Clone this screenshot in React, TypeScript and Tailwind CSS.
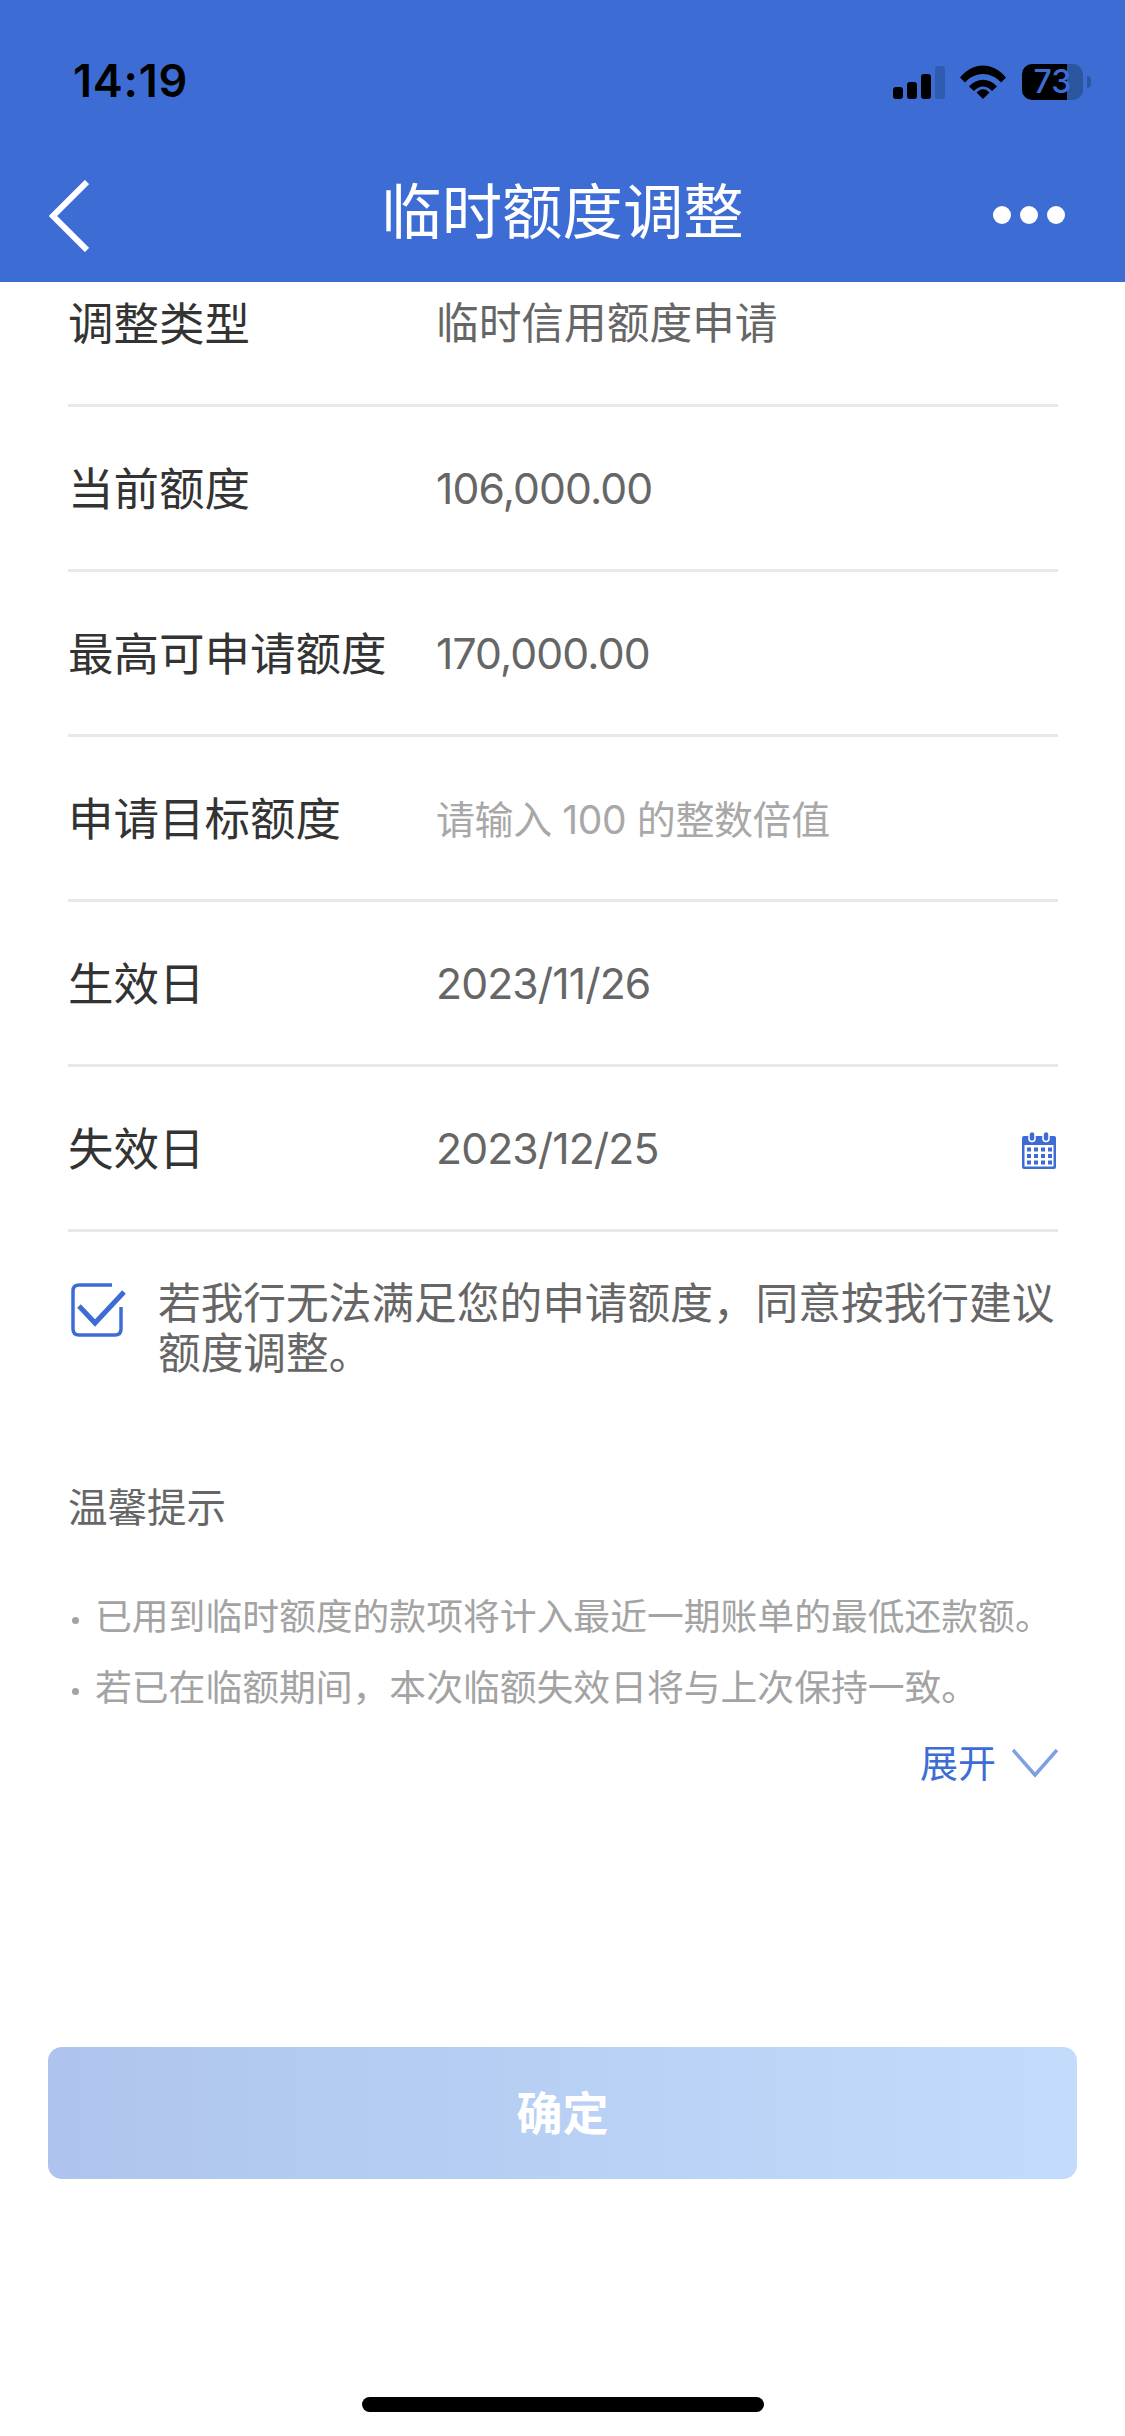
const cjk = "font-['Inter','Noto_Sans_CJK_SC',sans-serif]";

function Row({ label, value, muted, numeric, icon }: { label: string; value: string; muted?: boolean; numeric?: boolean; icon?: React.ReactNode }) {
  const valueClass = muted
    ? "flex-1 text-[39px] font-normal leading-none tracking-[-0.4px] text-[#a8a8a8]"
    : numeric
      ? "flex-1 text-[42.7px] font-normal leading-none tracking-[-0.9px] text-[#666666]"
      : "flex-1 text-[42.7px] font-normal leading-none text-[#666666]";
  return (
    <div className="flex h-[165px] items-center border-b-[3px] border-[#e8e8e8] pt-[3px]">
      <div className="w-[368px] shrink-0 text-[45.5px] font-normal leading-none text-[#333333]">{label}</div>
      <div className={valueClass}>{value}</div>
      {icon}
    </div>
  );
}

function CalendarIcon() {
  return (
    <svg width="36" height="38" viewBox="0 0 36 38" className="mr-[1px] shrink-0">
      <rect x="1" y="5" width="34" height="33" rx="2" fill="#3d6dd4" />
      <rect x="3.5" y="14" width="29" height="21.5" fill="#ffffff" />
      <rect x="8" y="0.5" width="6" height="10" rx="3" fill="#3d6dd4" stroke="#ffffff" strokeWidth="1.5" />
      <rect x="22" y="0.5" width="6" height="10" rx="3" fill="#3d6dd4" stroke="#ffffff" strokeWidth="1.5" />
      {[16.5, 23, 29.5].map((y) =>
        [6, 13, 20, 27].map((x) => <rect key={`${x}-${y}`} x={x} y={y} width="4" height="4" fill="#3d6dd4" />)
      )}
    </svg>
  );
}

export default function App() {
  return (
    <div className={`${cjk} relative flex h-[2436px] w-[1125px] flex-col overflow-hidden bg-white`}>
      <header className="relative z-10 h-[282px] shrink-0 bg-[#3d6dd4]">
        <div className="flex h-[163px] items-start justify-between pl-[73px] pr-[34px] pt-[64px]">
          <span className="text-[45px] font-semibold leading-[34px] tracking-[0.8px] text-black">14:19</span>
          <div className="flex items-start">
            <svg width="52" height="33" viewBox="0 0 52 33" className="mt-[2px]">
              <rect x="0" y="21" width="10" height="12" rx="3" fill="#000" />
              <rect x="14" y="16" width="10" height="17" rx="3" fill="#000" />
              <rect x="28" y="8" width="10" height="25" rx="3" fill="#000" />
              <rect x="42" y="0" width="10" height="33" rx="3" fill="#2f5bb0" />
            </svg>
            <svg width="46" height="34" viewBox="0 0 46 34" className="ml-[15px] mt-[1px]">
              <path d="M0 12.5C13 -3.5 33 -3.5 46 12.5L41 17.5C31 6 15 6 5 17.5Z" fill="#000" />
              <path d="M9 21.5C17 12.5 29 12.5 37 21.5L32 26C26.5 20 19.5 20 14 26Z" fill="#000" />
              <path d="M16.5 27.5C20.5 23 25.5 23 29.5 27.5L23 34Z" fill="#000" />
            </svg>
            <div className="relative ml-[16px] flex h-[36px] w-[61px]">
              <div className="flex h-full w-[45px] rounded-l-[10px] bg-black" />
              <div className="h-full w-[16px] rounded-r-[10px] bg-[#2c569f]" />
              <span className="absolute inset-0 flex items-center justify-center text-[32px] font-medium leading-none text-[#3d6dd4]">73</span>
            </div>
            <div className="ml-[4px] mt-[12px] h-[12px] w-[4px] rounded-r-full bg-[#2c569f]" />
          </div>
        </div>
        <div className="relative flex h-[100px] items-center justify-between pl-[49px] pr-[60px]">
          <svg width="40" height="72" viewBox="0 0 40 72" className="mt-[6px]">
            <path d="M38 2L4 36L38 70" fill="none" stroke="#fff" strokeWidth="6" />
          </svg>
          <h1 className="absolute inset-x-0 top-[-1px] flex h-[100px] items-center justify-center text-[60.4px] font-normal leading-none text-white">临时额度调整</h1>
          <div className="flex gap-[9px] pt-[4px]">
            <span className="size-[18px] rounded-full bg-white" />
            <span className="size-[18px] rounded-full bg-white" />
            <span className="size-[18px] rounded-full bg-white" />
          </div>
        </div>
      </header>

      <main className="mt-[-40px] pl-[68px] pr-[67px]">
        <Row label="调整类型" value="临时信用额度申请" />
        <Row label="当前额度" value="106,000.00" numeric />
        <Row label="最高可申请额度" value="170,000.00" numeric />
        <Row label="申请目标额度" value="请输入 100 的整数倍值" muted />
        <Row label="生效日" value="2023/11/26" numeric />
        <Row label="失效日" value="2023/12/25" numeric icon={<CalendarIcon />} />

        <div className="mt-[49px] flex">
          <svg width="56" height="54" viewBox="0 0 56 54" className="mt-[2px] ml-[3px] shrink-0">
            <path d="M41 2H8Q2 2 2 8V46Q2 52 8 52H44Q50 52 50 46V24" fill="none" stroke="#3d6dd4" strokeWidth="3.5" />
            <path d="M8 23L24 40L53 9" fill="none" stroke="#3d6dd4" strokeWidth="5" />
          </svg>
          <p className="ml-[31px] mt-[-2px] flex-1 text-[42.7px] font-normal leading-[50px] text-[#666666]">
            若我行无法满足您的申请额度，同意按我行建议额度调整。
          </p>
        </div>

        <h2 className="mt-[105px] text-[39.5px] font-normal leading-[48px] text-[#666666]">温馨提示</h2>

        <ul className="mt-[60px] flex flex-col gap-[21px]">
          {[
            "已用到临时额度的款项将计入最近一期账单的最低还款额。",
            "若已在临额期间，本次临额失效日将与上次保持一致。",
          ].map((t) => (
            <li key={t} className="flex h-[50px] items-center text-[36.8px] font-normal leading-[50px] whitespace-nowrap text-[#a3a3a3]">
              <span className="ml-[4px] mr-[16px] mt-[6px] size-[7px] shrink-0 rounded-full bg-[#a3a3a3]" />
              {t}
            </li>
          ))}
        </ul>

        <div className="mt-[25px] flex h-[50px] items-center justify-end gap-[16px]">
          <span className="text-[38px] font-normal leading-none text-[#3d6dd4]">展开</span>
          <svg width="46" height="30" viewBox="0 0 46 30">
            <path d="M1 2L23 27L45 2" fill="none" stroke="#7f9fe3" strokeWidth="3.5" />
          </svg>
        </div>
      </main>

      <div className="mt-[259px] px-[48px]">
        <button className="flex h-[132px] w-full items-center justify-center rounded-[14px] bg-gradient-to-r from-[#aec4ee] to-[#c3dcfb] text-[46px] font-bold text-white">
          确定
        </button>
      </div>

      <div className="absolute bottom-[24px] left-[362px] h-[15px] w-[402px] rounded-full bg-black" />
    </div>
  );
}
